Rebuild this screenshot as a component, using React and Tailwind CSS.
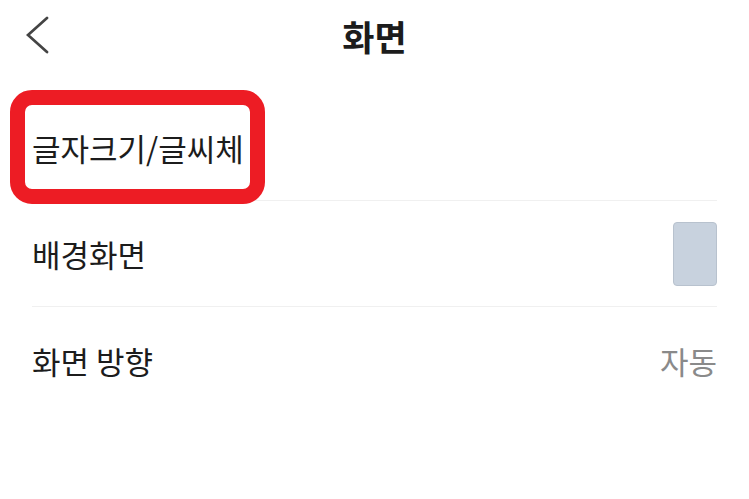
const rows = [
  { label: '글자크기/글씨체', right: null },
  { label: '배경화면', right: 'thumb' },
  { label: '화면 방향', right: '자동' },
]

export default function App() {
  return (
    <div
      className="relative w-[749px] h-[499px] bg-white overflow-hidden text-[#1c1c1c]"
      style={{ fontFamily: '"Noto Sans CJK KR", "Noto Sans", sans-serif' }}
    >
      <div className="relative h-[70px] flex items-center justify-center">
        <svg className="absolute left-[26px] top-[15px]" width="24" height="40" viewBox="0 0 24 40">
          <polyline points="21,3 2,20 21,37" fill="none" stroke="#444" strokeWidth="2.7" strokeLinecap="round" strokeLinejoin="miter" />
        </svg>
        <h1 className="text-[35px] font-bold leading-none">화면</h1>
      </div>

      <div className="px-[32px] pt-[25px]">
        {rows.map((r, i) => (
          <div
            key={r.label}
            className={`flex items-center justify-between h-[106px] ${i < rows.length - 1 ? 'border-b border-[#f0f0f0]' : ''}`}
          >
            <span className="text-[31px] leading-none">{r.label}</span>
            {r.right === 'thumb' && (
              <div className="w-[44px] h-[64px] rounded-[4px] bg-[#c8d2de] border border-[#b8c2ce]"></div>
            )}
            {r.right === '자동' && (
              <span className="text-[31px] leading-none text-[#8a8a8a]">자동</span>
            )}
          </div>
        ))}
      </div>

      <div className="absolute left-[10px] top-[90px] w-[255px] h-[114px] border-[15px] border-[#ed1c24] rounded-[22px]"></div>
    </div>
  )
}
